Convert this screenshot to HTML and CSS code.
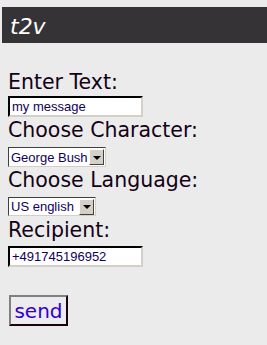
FILE: index.html
```html
<!DOCTYPE html>
<html lang="en">

<head>
    <meta charset="UTF-8">
    <title>t2v</title>
    <link rel="stylesheet" href="styles.css">
</head>

<body>
    <div class="header">t2v</div>
    <form class="sendform">
        <label class="caption" for="msg">Enter Text:</label>
        <input class="field" id="msg" type="text" value="my message">

        <label class="caption" for="who">Choose Character:</label>
        <span class="combo">
            <select id="who">
                <option>George Bush</option>
            </select>
            <span class="arrow"></span>
        </span>

        <label class="caption" for="lang">Choose Language:</label>
        <span class="combo combo-small">
            <select id="lang">
                <option>US english</option>
            </select>
            <span class="arrow"></span>
        </span>

        <label class="caption caption-last" for="to">Recipient:</label>
        <input class="field field-last" id="to" type="text" value="+491745196952">

        <button class="sendbtn" type="button">send</button>
    </form>
</body>

</html>
```

FILE: styles.css
```css
body {
    margin: 0;
    background-color: #ebebec;
    font-family: "DejaVu Sans", Verdana, sans-serif;
}

.header {
    margin: 7px 0 0 2px;
    height: 32px;
    padding: 4px 0 0 8px;
    line-height: 31px;
    background-color: #353336;
    color: #fff;
    font-size: 22px;
    font-style: italic;
}

.sendform {
    margin-top: 26px;
    padding-left: 8px;
}

.caption {
    display: block;
    font-size: 20.5px;
    line-height: 27px;
    color: #140214;
}

.caption-last {
    margin-top: 1px;
}

.field {
    display: block;
    box-sizing: border-box;
    width: 135px;
    height: 21px;
    margin: 0;
    padding: 0 2px;
    border: 2px inset #d4d0c8;
    border-top-color: #404040;
    border-left-color: #404040;
    background-color: #fff;
    font-family: "Liberation Sans", Arial, sans-serif;
    font-size: 13px;
    color: #10005a;
}

.field-last {
    margin-top: 2px;
}

.combo {
    display: flex;
    align-items: center;
    box-sizing: border-box;
    width: 98px;
    height: 20px;
    margin-top: 3px;
    border: 1px solid #404040;
    border-right-color: #d4d0c8;
    border-bottom-color: #d4d0c8;
    background-color: #fff;
}

.combo-small {
    width: 88px;
    height: 19px;
}

.combo select {
    flex: 1;
    min-width: 0;
    height: 100%;
    margin: 0;
    padding: 0 0 0 2px;
    border: none;
    outline: none;
    background: #fff;
    -webkit-appearance: none;
    appearance: none;
    font-family: "Liberation Sans", Arial, sans-serif;
    font-size: 13px;
    color: #10005a;
}

.arrow {
    display: flex;
    align-items: center;
    justify-content: center;
    box-sizing: border-box;
    width: 15px;
    height: 16px;
    margin-right: 1px;
    border: 1px solid;
    border-color: #fff #404040 #404040 #fff;
    background-color: #d4d0c8;
}

.arrow::after {
    content: "";
    border-left: 4px solid transparent;
    border-right: 4px solid transparent;
    border-top: 4px solid #000;
    margin-top: 1px;
}

.sendbtn {
    display: block;
    box-sizing: border-box;
    width: 59px;
    height: 31px;
    margin: 28px 0 0 1px;
    padding: 0;
    border: 2px solid;
    border-color: #808080 #1a0010 #1a0010 #808080;
    background-color: #ebebf0;
    font-family: "DejaVu Sans", Verdana, sans-serif;
    font-size: 20px;
    color: #3300cc;
}
```
